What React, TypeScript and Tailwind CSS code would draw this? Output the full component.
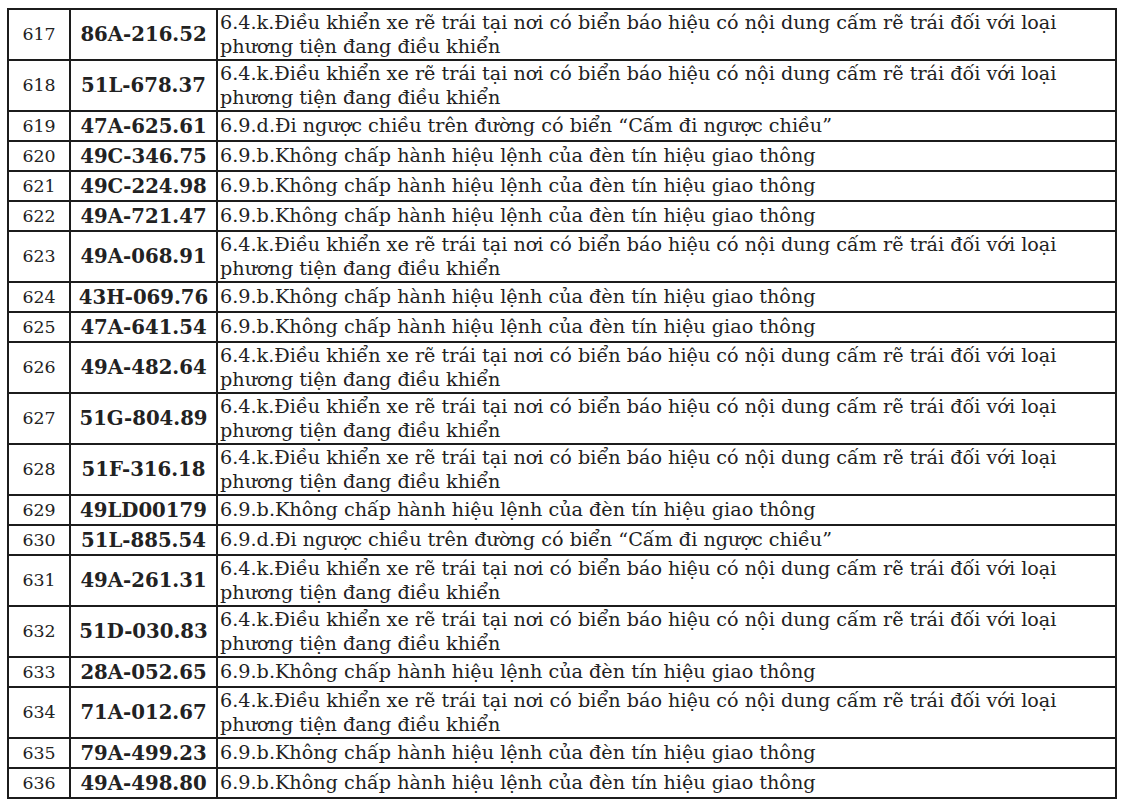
import React from "react";

const A = ["6.4.k.Điều khiển xe rẽ trái tại nơi có biển báo hiệu có nội dung cấm rẽ trái đối với loại", "phương tiện đang điều khiển"];
const B = ["6.9.b.Không chấp hành hiệu lệnh của đèn tín hiệu giao thông"];
const D = ["6.9.d.Đi ngược chiều trên đường có biển “Cấm đi ngược chiều”"];

const rows: [string, string, string[]][] = [
  ["617", "86A-216.52", A],
  ["618", "51L-678.37", A],
  ["619", "47A-625.61", D],
  ["620", "49C-346.75", B],
  ["621", "49C-224.98", B],
  ["622", "49A-721.47", B],
  ["623", "49A-068.91", A],
  ["624", "43H-069.76", B],
  ["625", "47A-641.54", B],
  ["626", "49A-482.64", A],
  ["627", "51G-804.89", A],
  ["628", "51F-316.18", A],
  ["629", "49LD00179", B],
  ["630", "51L-885.54", D],
  ["631", "49A-261.31", A],
  ["632", "51D-030.83", A],
  ["633", "28A-052.65", B],
  ["634", "71A-012.67", A],
  ["635", "79A-499.23", B],
  ["636", "49A-498.80", B],
];

export default function App() {
  return (
    <div className="w-[1122px] h-[799px] bg-white overflow-hidden pt-[8px] pl-[7px]" style={{ fontFamily: '"DejaVu Serif", serif' }}>
      <table className="border-collapse table-fixed w-[1108px] text-[#222]">
        <colgroup>
          <col className="w-[62px]" />
          <col className="w-[147px]" />
          <col className="w-[899px]" />
        </colgroup>
        <tbody>
          {rows.map(([n, plate, text]) => {
            const dbl = text.length > 1;
            return (
              <tr key={n} className={dbl ? "h-[51px]" : "h-[30px]"}>
                <td className="border-2 border-[#1c1c1c] text-center align-middle text-[17.4px] leading-[23px] p-0">{n}</td>
                <td className="border-2 border-[#1c1c1c] text-center align-middle text-[19.7px] leading-[23px] font-bold p-0 whitespace-nowrap">{plate}</td>
                <td className="border-2 border-[#1c1c1c] align-middle text-[19.2px] leading-[23.5px] pl-[2px] py-0 pr-0 whitespace-nowrap">
                  {text.map((t, i) => (
                    <div key={i}>{t}</div>
                  ))}
                </td>
              </tr>
            );
          })}
        </tbody>
      </table>
    </div>
  );
}
